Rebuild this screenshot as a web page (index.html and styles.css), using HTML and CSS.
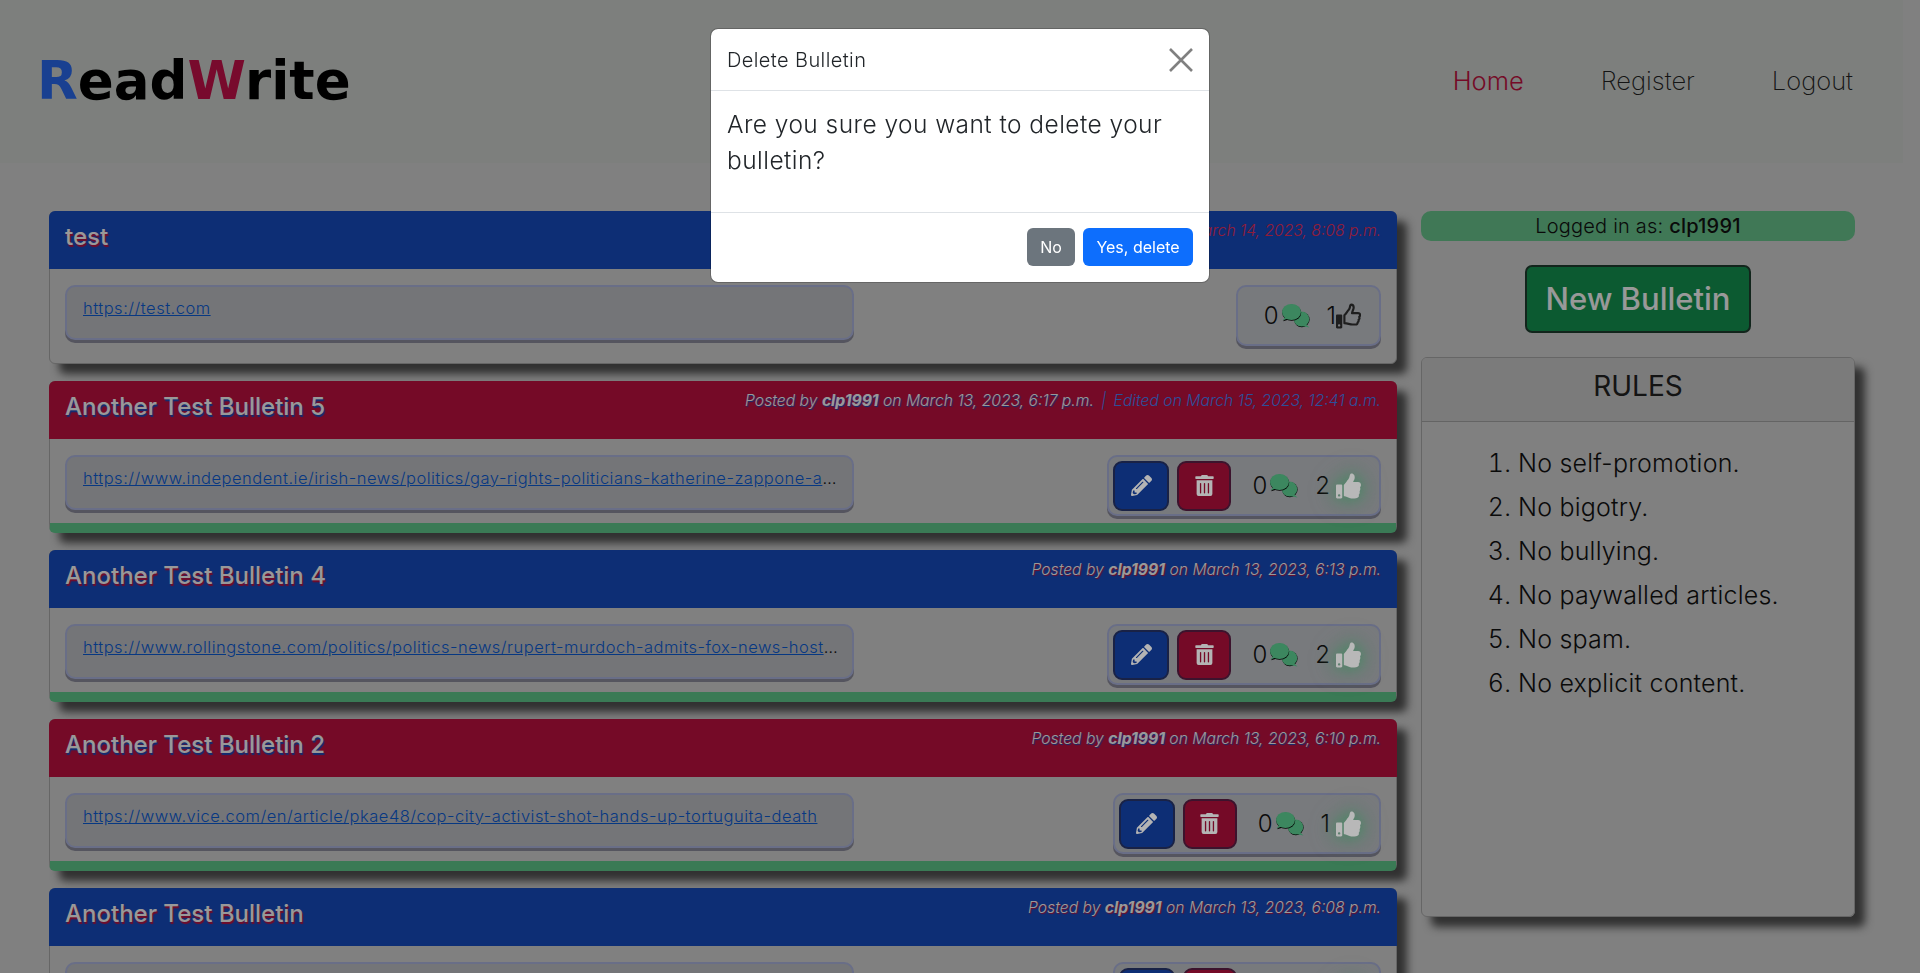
FILE: index.html
```html
<!DOCTYPE html>
<html lang="en">
<head>
    <meta charset="UTF-8">
    <meta name="viewport" content="width=device-width, initial-scale=1.0">
    <title>ReadWrite</title>
    <link rel="stylesheet" href="styles.css">
</head>
<body>
    <svg class="icon-defs" xmlns="http://www.w3.org/2000/svg">
        <symbol id="i-pencil" viewBox="0 0 512 512"><path d="M497.9 142.1l-46.1 46.1c-4.7 4.7-12.3 4.7-17 0l-111-111c-4.7-4.7-4.7-12.3 0-17l46.1-46.1c18.7-18.7 49.1-18.7 67.9 0l60.1 60.1c18.8 18.7 18.8 49.1 0 67.9zM284.2 99.8L21.6 362.4.4 483.9c-2.9 16.4 11.4 30.6 27.8 27.8l121.5-21.3 262.6-262.6c4.7-4.7 4.7-12.3 0-17l-111-111c-4.8-4.7-12.4-4.7-17.1 0zM124.1 339.9c-5.5-5.5-5.5-14.3 0-19.8l154-154c5.5-5.5 14.3-5.5 19.8 0s5.5 14.3 0 19.8l-154 154c-5.5 5.5-14.3 5.5-19.8 0zM88 424h48v36.3l-64.5 11.3-31.1-31.1L51.7 376H88v48z"/></symbol>
        <symbol id="i-trash" viewBox="0 0 448 512"><path d="M32 464a48 48 0 0 0 48 48h288a48 48 0 0 0 48-48V128H32zm272-256a16 16 0 0 1 32 0v224a16 16 0 0 1-32 0zm-96 0a16 16 0 0 1 32 0v224a16 16 0 0 1-32 0zm-96 0a16 16 0 0 1 32 0v224a16 16 0 0 1-32 0zM432 32H312l-9.4-18.7A24 24 0 0 0 281.1 0H166.8a23.72 23.72 0 0 0-21.4 13.3L136 32H16A16 16 0 0 0 0 48v32a16 16 0 0 0 16 16h416a16 16 0 0 0 16-16V48a16 16 0 0 0-16-16z"/></symbol>
        <symbol id="i-chat" viewBox="0 0 28 24">
            <ellipse fill="#000" cx="19.8" cy="15.6" rx="7.8" ry="7.6"/>
            <ellipse cx="19.5" cy="15" rx="7.8" ry="7.5"/>
            <path d="M23.5 20l4 3.500-7.500-1.500z"/>
            <path fill="#000" d="M4 13.500L1 17.200l6-1.700z"/>
            <ellipse fill="#000" cx="9.700" cy="8.800" rx="9.500" ry="8"/>
            <ellipse cx="9.500" cy="8" rx="9.500" ry="8"/>
            <path d="M3.500 13L.5 16.200l6-1.700z"/>
        </symbol>
        <symbol id="i-thumb" viewBox="0 0 512 512"><path d="M104 224H24c-13.255 0-24 10.745-24 24v240c0 13.255 10.745 24 24 24h80c13.255 0 24-10.745 24-24V248c0-13.255-10.745-24-24-24zM64 472c-13.255 0-24-10.745-24-24s10.745-24 24-24 24 10.745 24 24-10.745 24-24 24zM384 81.452c0 42.416-25.97 66.208-33.277 94.548h101.723c33.397 0 59.397 27.746 59.553 58.098.084 17.938-7.546 37.249-19.439 49.197l-.11.11c9.836 23.337 8.237 56.037-9.308 79.469 8.681 25.895-.069 57.704-16.382 74.757 4.298 17.598 2.244 32.575-6.148 44.632C440.202 511.587 389.616 512 346.839 512l-2.845-.001c-48.287-.017-87.806-17.598-119.56-31.725-15.957-7.099-36.821-15.887-52.651-16.178-6.54-.12-11.783-5.457-11.783-11.998v-213.77c0-3.2 1.282-6.271 3.558-8.521 39.614-39.144 56.648-80.587 89.117-113.111 14.804-14.832 20.188-37.236 25.393-58.902C282.515 39.293 291.817 0 312 0c24 0 72 8 72 81.452z"/></symbol>
        <symbol id="i-thumb-o" viewBox="0 0 512 512"><path d="M104 224H24c-13.3 0-24 10.7-24 24v240c0 13.3 10.7 24 24 24h80c13.3 0 24-10.7 24-24V248c0-13.3-10.7-24-24-24zM64 472c-13.3 0-24-10.7-24-24s10.700-24 24-24 24 10.700 24 24-10.700 24-24 24z"/><path fill="none" stroke="currentColor" stroke-width="44" stroke-linejoin="round" d="M172 240c42-40 58-82 90-114 22-22 24-54 30-84 3-12 10-20 20-20 30 0 50 24 50 60 0 40-26 64-34 116h124c26 0 42 20 42 38 0 16-8 30-20 38 10 20 6 48-12 60 6 24-4 44-20 52 4 26-12 44-44 44h-58c-60 0-96-24-168-28z"/></symbol>
    </svg>

    <div class="page">
        <header class="site-header">
            <a class="logo" href="#"><span class="logo-r">R</span>ead<span class="logo-w">W</span>rite</a>
            <nav class="nav">
                <a class="nav-link active" href="#">Home</a>
                <a class="nav-link" href="#">Register</a>
                <a class="nav-link" href="#">Logout</a>
            </nav>
        </header>

        <main class="main">
            <section class="bulletins">
                <article class="card blue">
                    <div class="card-head">
                        <h2 class="card-title">test</h2>
                        <p class="meta">Posted by <b>clp1991</b> on March 14, 2023, 7:52 p.m. <span class="sep">|</span> <span class="edited">Edited on March 14, 2023, 8:08 p.m.</span></p>
                    </div>
                    <div class="card-body">
                        <div class="link-box"><a href="#">https://test.com</a></div>
                        <div class="actions">
                            <span class="count">0</span><svg class="chat"><use href="#i-chat"/></svg>
                            <span class="count likes">1</span><svg class="thumb-o"><use href="#i-thumb-o"/></svg>
                        </div>
                    </div>
                </article>

                <article class="card red own">
                    <div class="card-head">
                        <h2 class="card-title">Another Test Bulletin 5</h2>
                        <p class="meta">Posted by <b>clp1991</b> on March 13, 2023, 6:17 p.m. <span class="sep">|</span> <span class="edited">Edited on March 15, 2023, 12:41 a.m.</span></p>
                    </div>
                    <div class="card-body">
                        <div class="link-box"><a href="#">https://www.independent.ie/irish-news/politics/gay-rights-politicians-katherine-zappone-and-ann-louise-gilligan</a></div>
                        <div class="actions">
                            <button class="tool edit"><svg><use href="#i-pencil"/></svg></button>
                            <button class="tool del"><svg><use href="#i-trash"/></svg></button>
                            <span class="count first">0</span><svg class="chat"><use href="#i-chat"/></svg>
                            <span class="count likes">2</span><svg class="thumb"><use href="#i-thumb"/></svg>
                        </div>
                    </div>
                </article>

                <article class="card blue own">
                    <div class="card-head">
                        <h2 class="card-title">Another Test Bulletin 4</h2>
                        <p class="meta">Posted by <b>clp1991</b> on March 13, 2023, 6:13 p.m.</p>
                    </div>
                    <div class="card-body">
                        <div class="link-box"><a href="#">https://www.rollingstone.com/politics/politics-news/rupert-murdoch-admits-fox-news-hosts-lied-about-election</a></div>
                        <div class="actions">
                            <button class="tool edit"><svg><use href="#i-pencil"/></svg></button>
                            <button class="tool del"><svg><use href="#i-trash"/></svg></button>
                            <span class="count first">0</span><svg class="chat"><use href="#i-chat"/></svg>
                            <span class="count likes">2</span><svg class="thumb"><use href="#i-thumb"/></svg>
                        </div>
                    </div>
                </article>

                <article class="card red own">
                    <div class="card-head">
                        <h2 class="card-title">Another Test Bulletin 2</h2>
                        <p class="meta">Posted by <b>clp1991</b> on March 13, 2023, 6:10 p.m.</p>
                    </div>
                    <div class="card-body">
                        <div class="link-box"><a href="#">https://www.vice.com/en/article/pkae48/cop-city-activist-shot-hands-up-tortuguita-death</a></div>
                        <div class="actions">
                            <button class="tool edit"><svg><use href="#i-pencil"/></svg></button>
                            <button class="tool del"><svg><use href="#i-trash"/></svg></button>
                            <span class="count first">0</span><svg class="chat"><use href="#i-chat"/></svg>
                            <span class="count likes">1</span><svg class="thumb"><use href="#i-thumb"/></svg>
                        </div>
                    </div>
                </article>

                <article class="card blue own">
                    <div class="card-head">
                        <h2 class="card-title">Another Test Bulletin</h2>
                        <p class="meta">Posted by <b>clp1991</b> on March 13, 2023, 6:08 p.m.</p>
                    </div>
                    <div class="card-body">
                        <div class="link-box"><a href="#">https://test.com</a></div>
                        <div class="actions">
                            <button class="tool edit"><svg><use href="#i-pencil"/></svg></button>
                            <button class="tool del"><svg><use href="#i-trash"/></svg></button>
                            <span class="count first">0</span><svg class="chat"><use href="#i-chat"/></svg>
                            <span class="count likes">1</span><svg class="thumb"><use href="#i-thumb"/></svg>
                        </div>
                    </div>
                </article>
            </section>

            <aside class="sidebar">
                <p class="logged-in">Logged in as: <b>clp1991</b></p>
                <a class="new-bulletin" href="#">New Bulletin</a>
                <section class="rules">
                    <h3 class="rules-head">RULES</h3>
                    <ol class="rules-list">
                        <li>No self-promotion.</li>
                        <li>No bigotry.</li>
                        <li>No bullying.</li>
                        <li>No paywalled articles.</li>
                        <li>No spam.</li>
                        <li>No explicit content.</li>
                    </ol>
                </section>
            </aside>
        </main>
    </div>

    <div class="backdrop"></div>

    <div class="modal-wrap">
        <div class="modal">
            <div class="modal-head">
                <h5 class="modal-title">Delete Bulletin</h5>
                <button class="close" aria-label="Close">
                    <svg viewBox="0 0 24 24"><path d="M1 1l22 22M23 1L1 23"/></svg>
                </button>
            </div>
            <div class="modal-body">Are you sure you want to delete your bulletin?</div>
            <div class="modal-foot">
                <button class="btn btn-no">No</button>
                <button class="btn btn-yes">Yes, delete</button>
            </div>
        </div>
    </div>
</body>
</html>
```

FILE: styles.css
```css
* {
    box-sizing: border-box;
}

html, body {
    height: 100%;
    margin: 0;
    overflow: hidden;
}

body {
    background-color: #d5d5d5;
    color: #111;
    font-family: Inter, "Noto Sans", sans-serif;
    font-weight: 300;
}

.icon-defs {
    display: none;
}

.page {
    width: 1903px;
}

/* header */
.site-header {
    display: flex;
    align-items: center;
    justify-content: space-between;
    height: 163px;
    padding: 0 50px 0 37px;
    background-color: #d0d4d0;
}

.logo {
    margin-top: -2px;
    color: #000;
    font-family: "DejaVu Sans", sans-serif;
    font-size: 53px;
    font-weight: 700;
    text-decoration: none;
}

.logo-r {
    color: #2a6cf2;
}

.logo-w {
    color: #c8114b;
}

.nav {
    display: flex;
    gap: 77px;
    margin-top: -2px;
}

.nav-link {
    color: #222;
    font-size: 25.5px;
    font-weight: 200;
    text-decoration: none;
}

.nav-link.active {
    color: #c31241;
    font-weight: 300;
}

/* layout */
.main {
    display: flex;
    gap: 24px;
    padding: 48px 48px 0 49px;
}

.bulletins {
    display: flex;
    flex-direction: column;
    gap: 17px;
    width: 1348px;
    flex-shrink: 0;
}

/* bulletin cards */
.card {
    border: 1px solid #aaa;
    border-radius: 6px;
    background-color: #d5d5d5;
    box-shadow: 10px 10px 8px rgba(0, 0, 0, .62);
}

.card.own {
    border-bottom: 10px solid #61cb8e;
}

.card-head {
    display: flex;
    justify-content: space-between;
    height: 58px;
    margin: -1px -1px 0;
    padding: 7px 16px 0;
    border-radius: 6px 6px 0 0;
    color: #fff;
}

.blue .card-head {
    background-color: #174dc3;
}

.red .card-head {
    background-color: #c31241;
}

.card-title {
    margin: 0;
    font-size: 24px;
    font-weight: 500;
    line-height: 37px;
    white-space: nowrap;
}

.blue .card-title {
    text-shadow: 1px 2px 1px #c31241;
}

.red .card-title {
    text-shadow: 1px 2px 1px #174dc3;
}

.blue .meta {
    text-shadow: 1px 1px 1px #c31241;
}

.red .meta {
    text-shadow: 1px 1px 1px #174dc3;
}

.meta {
    margin: 0;
    font-size: 15.7px;
    font-style: italic;
    line-height: 26px;
    white-space: nowrap;
}

.meta b {
    font-weight: 700;
}

.sep {
    margin: 0 3px;
}

.blue .edited, .blue .sep {
    color: #f0305e;
    text-shadow: 1px 1px 1px #174dc3;
}

.red .edited, .red .sep {
    color: #4a86ff;
    text-shadow: 1px 1px 1px #c31241;
}

.card-body {
    display: flex;
    justify-content: space-between;
    height: 94px;
    padding: 16px 15px 0;
}

.card.own .card-body {
    height: 84px;
}

.link-box {
    width: 789px;
    height: 55px;
    padding: 9px 6px 0 16px;
    overflow: hidden;
    border: 2px solid #afb7e1;
    border-radius: 10px;
    background-color: #c1c3c8;
    box-shadow: 0 3px 0 #8e8e9e;
    font-size: 16.5px;
    letter-spacing: .5px;
    line-height: 24px;
    white-space: nowrap;
    text-overflow: ellipsis;
}

.link-box a {
    color: #0d5ed9;
}

.actions {
    display: flex;
    align-items: center;
    height: 61px;
    padding: 0 18px 0 4px;
    border: 2px solid #afb7e1;
    border-radius: 10px;
    background-color: #c8cbd0;
    box-shadow: 0 3px 0 #8e8e9e;
}

.tool {
    display: flex;
    align-items: center;
    justify-content: center;
    width: 56px;
    height: 50px;
    margin-right: 8px;
    padding: 0;
    border: 2px solid #2a3a75;
    border-radius: 9px;
    background-color: #174dc3;
}

.tool.del {
    width: 54px;
    margin-right: 0;
    border-color: #64214b;
    background-color: #c31241;
}

/* these icons sit above the backdrop, the reference shows them brighter than the rest */
.tool svg {
    position: relative;
    z-index: 1;
    width: 21px;
    height: 21px;
    fill: #b4b4b4;
}

.count {
    margin-left: 22px;
    color: #111;
    font-size: 24px;
}

.count.first {
    margin-left: 21px;
}

.count.likes {
    margin-left: 17px;
}

.chat {
    width: 28px;
    height: 24px;
    margin-left: 3px;
    fill: #64e19e;
}

.thumb {
    position: relative;
    z-index: 1;
    width: 25px;
    height: 26px;
    margin-left: 6px;
    fill: #b8b8b8;
    filter: drop-shadow(0 0 7px #4a8a66) drop-shadow(0 0 10px rgba(70, 130, 95, .7));
}

.thumb-o {
    width: 25px;
    height: 26px;
    color: #333;
    fill: #333;
}

/* sidebar */
.sidebar {
    display: flex;
    flex-direction: column;
    align-items: center;
    width: 434px;
}

.logged-in {
    width: 100%;
    height: 30px;
    margin: 0 0 24px;
    border-radius: 10px;
    background-color: #6bc88f;
    font-size: 20px;
    letter-spacing: .2px;
    line-height: 31px;
    text-align: center;
}

.logged-in b {
    font-weight: 500;
}

.new-bulletin {
    width: 226px;
    height: 68px;
    margin-bottom: 24px;
    border: 2px solid #1f3f30;
    border-radius: 7px;
    background-color: #149653;
    color: #fff;
    font-size: 31px;
    font-weight: 500;
    line-height: 64px;
    text-align: center;
    text-decoration: none;
}

.rules {
    width: 100%;
    height: 560px;
    border: 1px solid #aaa;
    border-radius: 6px;
    box-shadow: 10px 10px 8px rgba(0, 0, 0, .62);
}

.rules-head {
    height: 64px;
    margin: 0;
    border-bottom: 1px solid #a7a7a7;
    border-radius: 5px 5px 0 0;
    background-color: #cecece;
    color: #222;
    font-size: 28px;
    font-weight: 400;
    line-height: 56px;
    text-align: center;
}

.rules-list {
    margin: 0;
    padding: 19px 0 0 96px;
    font-size: 25px;
    letter-spacing: .2px;
    line-height: 44px;
}

/* modal */
.backdrop {
    position: fixed;
    inset: 0;
    background-color: rgba(0, 0, 0, .4);
}

.modal-wrap {
    position: fixed;
    inset: 0;
    z-index: 2;
    display: flex;
    justify-content: center;
    align-items: flex-start;
    padding-top: 28px;
}

.modal {
    width: 500px;
    border: 1px solid rgba(0, 0, 0, .2);
    border-radius: 8px;
    background-color: #fff;
    background-clip: padding-box;
    color: #212529;
}

.modal-head {
    display: flex;
    align-items: center;
    justify-content: space-between;
    height: 62px;
    padding: 0 16px;
    border-bottom: 1px solid #dee2e6;
}

.modal-title {
    margin: 0;
    font-size: 20px;
    font-weight: 300;
    letter-spacing: .4px;
}

.close {
    width: 24px;
    height: 24px;
    padding: 0;
    border: 0;
    background: none;
}

.close svg {
    display: block;
    stroke: #808080;
    stroke-width: 2.6;
}

.modal-body {
    height: 121px;
    padding: 15px 16px 16px;
    font-size: 24.5px;
    letter-spacing: .45px;
    line-height: 36px;
}

.modal-foot {
    display: flex;
    justify-content: flex-end;
    gap: 8px;
    height: 70px;
    padding: 15px 16px;
    border-top: 1px solid #dee2e6;
}

.btn {
    height: 38px;
    padding: 0;
    border: 0;
    border-radius: 6px;
    color: #fff;
    font-family: inherit;
    font-size: 16px;
    font-weight: 400;
}

.btn-no {
    width: 48px;
    background-color: #6c757d;
}

.btn-yes {
    width: 110px;
    background-color: #0d6efd;
}
```
